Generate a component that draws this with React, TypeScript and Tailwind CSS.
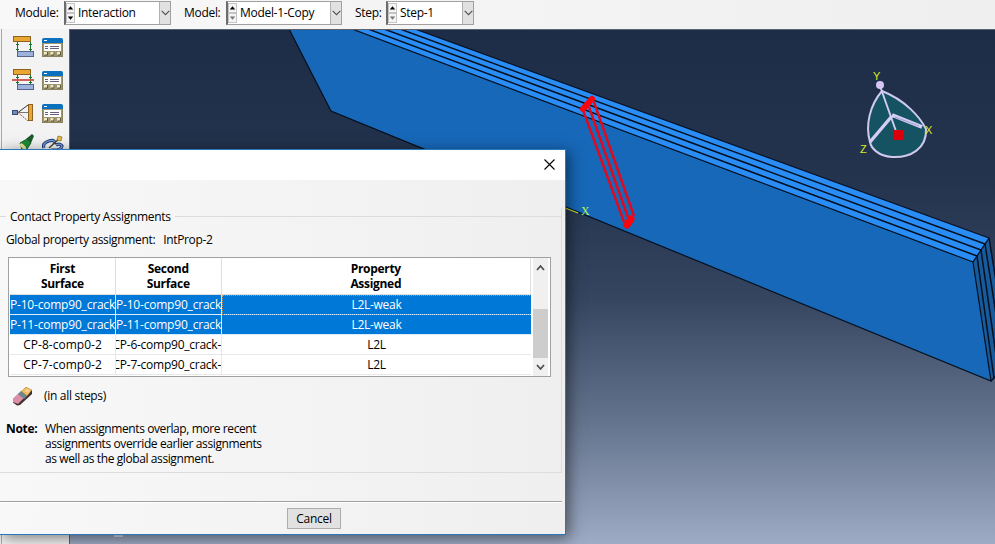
import React from "react";
import clsx from "clsx";

const rows = [
  {first: "P-10-comp90_crack", second: "P-10-comp90_crack", property: "L2L-weak", selected: true, focused: true},
  {first: "P-11-comp90_crack", second: "P-11-comp90_crack", property: "L2L-weak", selected: true},
  {first: "CP-8-comp0-2", second: "CP-6-comp90_crack-", property: "L2L"},
  {first: "CP-7-comp0-2", second: "CP-7-comp90_crack-", property: "L2L"},
];

function Spinner({dim}: {dim?: boolean}) {
  return (
    <svg width="9" height="20" viewBox="0 0 9 20" className="shrink-0">
      <rect x=".5" y=".5" width="8" height="9" fill="#f4f4f4" stroke="#c4c4c4"/>
      <rect x=".5" y="10.5" width="8" height="9" fill="#f4f4f4" stroke="#c4c4c4"/>
      <path d="M1.8 6.5h5.4L4.5 3.2z" fill="#000"/>
      <path d="M1.8 13.5h5.4L4.5 16.8z" fill={dim ? "#777" : "#000"}/>
    </svg>
  );
}

function Picker({label, value, dim, className, labelClass}: {label: string; value: string; dim?: boolean; className: string; labelClass: string}) {
  return (
    <>
      <span className={clsx("shrink-0 whitespace-nowrap", labelClass)}>{label}</span>
      <div className={clsx("flex h-6 shrink-0 items-center border border-[#a0a0a0] border-l-2 border-l-[#6c6c6c] bg-white", className)}>
        <Spinner dim={dim}/>
        <span className="ml-[3px] grow whitespace-nowrap">{value}</span>
        <span className="flex h-[22px] w-[11px] items-center justify-center border-l border-[#b0b0b0] bg-[#e1e1e1]">
          <svg width="9" height="6" viewBox="0 0 9 6" fill="none" stroke="#505050" strokeWidth="1.1"><path d="M.7.8 4.5 4.6 8.3.8"/></svg>
        </span>
      </div>
    </>
  );
}

function ManagerIcon() {
  return (
    <svg width="22" height="19" viewBox="0 0 22 19">
      <rect x=".5" y="3.5" width="20" height="15" fill="#a0976c" stroke="#8b8360"/>
      <path d="M0 5V2Q0 0 2 0h17q2 0 2 2v3z" fill="#0b70bd"/>
      <path d="M2 2.500h3" stroke="#fff"/>
      <rect x="2" y="6" width="17" height="7" fill="#fff"/>
      <path d="M3 8.500h3M8 8.500h9M3 10.500h3M8 10.500h9" stroke="#66607a"/>
      <path d="M2 14h4v3H2zM8.500 14h4v3h-4zM15 14h4v3h-4z" fill="#f0e8c4"/>
      <path d="M5.500 14v3h-3M12 14v3H9M18.500 14v3h-3" stroke="#35352b" fill="none" strokeWidth=".8"/>
    </svg>
  );
}

function InteractionIcon({cut}: {cut?: boolean}) {
  return (
    <svg width="23" height="22" viewBox="0 0 23 22">
      <path d="M5.500 6v10M18.500 6v10" stroke="#17752a"/>
      <path d="M4 8.500h3M4 13.500h3M17 8.500h3M17 13.500h3" stroke="#17752a"/>
      <rect x="1.500" y=".5" width="17" height="5" fill="#e9a72f" stroke="#8c6225"/>
      <rect x="5.500" y="15.500" width="16" height="5" fill="#9db2dd" stroke="#58658a"/>
      {cut && <path d="M0 11h22" stroke="#cf5044" strokeWidth="1.8"/>}
    </svg>
  );
}

function CouplingIcon() {
  return (
    <svg width="23" height="20" viewBox="0 0 23 20">
      <path d="M6 9.500 16 2" stroke="#333"/>
      <path d="M6 9.500h10" stroke="#777"/>
      <path d="M6 9.500 16 18" stroke="#a34a50" strokeDasharray="2 1"/>
      <rect x="16.500" y="1.500" width="4" height="16" fill="#eaa72f" stroke="#8c6225"/>
      <rect x=".5" y="7.500" width="5" height="4" fill="#6e8dbd" stroke="#334d7c"/>
    </svg>
  );
}

function Toolbox() {
  return (
    <div className="flex w-[69px] shrink-0 bg-[#f3f3f3]">
      <div className="h-full w-[2px] border-r border-[#a8a8a8]"/>
      <div className="ml-[10px] flex w-[23px] flex-col pt-[7px]">
        <div className="h-[33px]"><InteractionIcon/></div>
        <div className="h-[34px]"><InteractionIcon cut/></div>
        <div className="h-[31px]"><CouplingIcon/></div>
        <svg width="23" height="20" viewBox="0 0 23 20">
          <path d="m8 9 7-4 4 4-4 6-5 1z" fill="#1f8a38" stroke="#0c4a1c" strokeWidth=".8"/>
          <path d="m14 5 6-5 2 2-3 7z" fill="#195c29"/>
          <ellipse cx="11" cy="12.500" rx="4" ry="1.800" transform="rotate(45 11 12.500)" fill="#e9e79a"/>
        </svg>
      </div>
      <div className="ml-[7px] flex w-[22px] flex-col pt-[9px]">
        <div className="h-[33px]"><ManagerIcon/></div>
        <div className="h-[33px]"><ManagerIcon/></div>
        <div className="h-[31px]"><ManagerIcon/></div>
        <svg width="22" height="20" viewBox="0 0 22 20" fill="none">
          <path d="M2 13Q0 8 7 6t5 3M9 15q10 1 11-4-2-3-6-1" stroke="#1c3a78" strokeWidth="3.200"/>
          <path d="M2 13Q0 8 7 6t5 3M9 15q10 1 11-4-2-3-6-1" stroke="#7fa3dc" strokeWidth="1.300"/>
          <path d="m7 13 11-10" stroke="#4c4426" strokeWidth="1.500"/>
          <path d="m16 1 4 1-1 4-4-1z" fill="#e7bd45" stroke="#6d5a23" strokeWidth=".6"/>
        </svg>
      </div>
    </div>
  );
}

function Viewport() {
  return (
    <div className="min-w-0 grow border-l border-t border-[#5b6370] bg-[linear-gradient(#1d2d47,#24344e_30%,#35455f_52%,#66758f_77%,#9eabc4)]">
      <svg width="925" height="514" viewBox="70 30 925 514" className="block">
        {/* plate */}
        <path d="M289 29 331 111 991 381 973 262 352 29z" fill="#1768b9"/>
        <path d="M352 29 973 262 989 238 415 29z" fill="#2a8df5"/>
        <path d="M973 262 991 381 996 376V275L989 238z" fill="#185b9c"/>
        <g stroke="#04101f" strokeWidth="1.200" fill="none">
          <path d="M289 29 331 111 991 381 973 262 989 238 415 29M352 29 973 262"/>
          <path d="M368 29 977 256M384 29 981 250M400 29 985 244" strokeWidth="1.500"/>
          <path d="M977 256 994 378M981 250 996 355M985 244 996 314M989 238 996 281M991 381 996 376" strokeWidth="1.500"/>
        </g>

        {/* connector */}
        <g stroke="#e3091c" strokeWidth="2.400">
          <path d="M583 110 624 222M589 107 629 220M594 102 634 216"/>
        </g>
        <g stroke="#f9050b" strokeLinecap="round" strokeLinejoin="round">
          <path d="M583 109 592 99" strokeWidth="6"/>
          <path d="M627 225 631 219" strokeWidth="7"/>
        </g>

        <path d="M560 206 578 213" stroke="#c8e82c" strokeWidth="1.300"/>
        <path d="M114 536h9" stroke="#e6eaf2" strokeWidth="1.500"/>

        {/* view triad */}
        <path d="M882 91C905 100 920 117 926 129 927 149 910 158 892 157 878 156 871 148 870 142 865 125 870 105 882 91z" fill="#155262" stroke="#cfc9ee" strokeWidth="2"/>
        <path d="M880 86 897 134" stroke="#d5cdf5" strokeWidth="1.900"/>
        <path d="M870 142 892 116" stroke="#d5cdf5" strokeWidth="3.400"/>
        <path d="M892 115 922 127" stroke="#d5cdf5" strokeWidth="4"/>
        <path d="M895 117 919 126" stroke="#8f91c0" strokeWidth=".8"/>
        <circle cx="880" cy="85" r="4" fill="#d5c6f5"/>
        <rect x="893" y="130" width="10" height="10" fill="#d9000b"/>
        <g fill="#dcea25" fontFamily="'Liberation Sans', sans-serif" fontSize="11">
          <text x="873" y="80">Y</text>
          <text x="925" y="134">X</text>
          <text x="860" y="153">Z</text>
        </g>
        <text x="581" y="215" fill="#b8f05a" fontFamily="'Liberation Serif', serif" fontSize="12">X</text>
      </svg>
    </div>
  );
}

function Cell({children, selected, className}: {children: React.ReactNode; selected?: boolean; className: string}) {
  return (
    <div className={clsx("flex h-full shrink-0 overflow-hidden whitespace-nowrap border-b border-r leading-[19px]", className,
      selected ? "border-[#d8ecfc] bg-[#0078d7] text-white" : "border-[#e8e8e8]")}>
      <span className="shrink-0">{children}</span>
    </div>
  );
}

function AssignmentTable() {
  return (
    <div className="ml-2 flex h-[120px] w-[543px] border border-[#a0a0a0] bg-white">
      <div className="flex w-[522px] flex-col overflow-hidden pl-px">
        <div className="flex h-[37px] shrink-0 text-center font-bold leading-[15px]">
          <div className="w-[106px] border-b border-r border-[#dedede] pt-[3px]">First<br/>Surface</div>
          <div className="w-[106px] border-b border-r border-[#dedede] pt-[3px]">Second<br/>Surface</div>
          <div className="w-[310px] border-b border-r border-[#dedede] pt-[3px]">Property<br/>Assigned</div>
        </div>
        {rows.map(row => (
          <div key={row.first} className="flex h-5 shrink-0">
            <Cell selected={row.selected} className={clsx("w-[106px] justify-center", row.selected ? "tracking-[-0.2px]" : "tracking-[0.02px]")}>{row.first}</Cell>
            <Cell selected={row.selected} className={clsx("w-[106px]", row.selected ? "justify-center tracking-[-0.2px]" : "justify-end tracking-[-0.25px]")}>{row.second}</Cell>
            <Cell selected={row.selected} className={clsx("w-[310px] justify-center", row.focused && "outline-1 -outline-offset-1 outline-dotted outline-[#d98a3c]")}>{row.property}</Cell>
          </div>
        ))}
      </div>
      <div className="ml-[2px] flex w-[15px] shrink-0 flex-col items-center bg-[#f0f0f0]">
        <svg width="15" height="51" viewBox="0 0 15 51" className="shrink-0" fill="none" stroke="#505050" strokeWidth="1.800"><path d="m4 12 3.500-4 3.500 4"/></svg>
        <div className="h-[49px] w-full shrink-0 bg-[#cdcdcd]"/>
        <svg width="15" height="18" viewBox="0 0 15 18" className="shrink-0" fill="none" stroke="#505050" strokeWidth="1.800"><path d="m4 7 3.500 4L11 7"/></svg>
      </div>
    </div>
  );
}

function Dialog() {
  return (
    <div className="absolute left-0 top-[149px] flex h-[386px] w-[566px] flex-col border-y border-r border-[#2878bd] bg-[linear-gradient(90deg,#f8f8f8,#efefef)] shadow-[3px_3px_14px_rgba(0,0,0,0.5)]">
      <div className="flex h-[30px] shrink-0 justify-end bg-white pr-[10px] pt-[9px]">
        <svg width="11" height="11" viewBox="0 0 11 11" stroke="#000" strokeWidth="1.100"><path d="m.5.5 10 10M10.500.5l-10 10"/></svg>
      </div>

      <fieldset className="mt-[28px] flex h-[265px] w-[562px] shrink-0 flex-col border-b border-r border-[#dcdcdc]">
        <div className="flex h-4 items-center pt-px">
          <span className="w-[6px] border-t border-[#dcdcdc]"/>
          <span className="w-[169px] shrink-0 pl-1 leading-4">Contact Property Assignments</span>
          <span className="grow border-t border-[#dcdcdc]"/>
        </div>
        <div className="mt-[8px] flex h-4 gap-[8px] pl-[6px] leading-4 tracking-[-0.35px]">
          <span>Global property assignment:</span>
          <span>IntProp-2</span>
        </div>
        <div className="mt-[9px]"><AssignmentTable/></div>
        <div className="mt-[8px] flex h-[22px] items-center pl-3">
          <svg width="21" height="20" viewBox="0 0 21 20">
            <path d="m1 13 13-12 6 3v4L8 19l-3 .5-4-3z" fill="#40302c"/>
            <path d="m1 13 5-5 6 4-6 6-5-2z" fill="#dc8fa8"/>
            <path d="m6 8 3-3 6 5-3 3z" fill="#6f8790"/>
            <path d="m9 5 5-4 6 3-5 6z" fill="#edb860"/>
            <path d="m12 5 3-2 3 1-2 3z" fill="#f7d08c"/>
          </svg>
          <span className="ml-[11px]">(in all steps)</span>
        </div>
        <div className="mt-[14px] flex pl-[6px] leading-[15px]">
          <b className="w-[39px] shrink-0">Note:</b>
          <p className="tracking-[-0.4px]">When assignments overlap, more recent<br/>assignments override earlier assignments<br/>as well as the global assignment.</p>
        </div>
      </fieldset>

      <div className="mt-[28px] h-[2px] w-[562px] shrink-0 border-b border-t border-b-white border-t-[#a0a0a0]"/>
      <button className="ml-[287px] mt-[5px] h-[21px] w-[54px] shrink-0 border border-[#adadad] bg-[#e1e1e1] leading-[18px]">Cancel</button>
    </div>
  );
}

export default function App() {
  return (
    <div className="relative flex h-[544px] w-[995px] flex-col overflow-hidden bg-[#f0f0f0] font-['Open_Sans','Noto_Sans',sans-serif] text-[12px] tracking-[-0.3px] text-black">
      <div className="flex h-[29px] shrink-0 items-center bg-[linear-gradient(90deg,#f8f8f8,#efefef)] pb-[3px] pl-[15px]">
        <Picker label="Module:" value="Interaction" className="w-[107px]" labelClass="w-[49px]"/>
        <Picker label="Model:" value="Model-1-Copy" dim className="w-[116px]" labelClass="ml-[13px] w-[42px]"/>
        <Picker label="Step:" value="Step-1" dim className="w-[88px]" labelClass="ml-[13px] w-[31px]"/>
      </div>
      <div className="flex min-h-0 grow">
        <Toolbox/>
        <Viewport/>
      </div>
      <Dialog/>
    </div>
  );
}
